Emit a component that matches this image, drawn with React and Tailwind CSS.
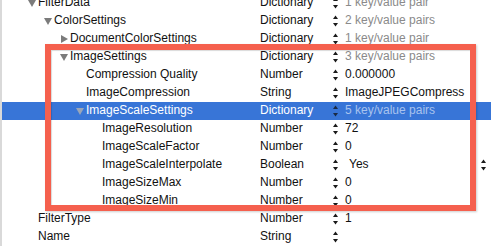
const ROWS = [
    { key: 'FilterData', level: 0, tri: 'down', type: 'Dictionary', value: '1 key/value pair', muted: true },
    { key: 'ColorSettings', level: 1, tri: 'down', type: 'Dictionary', value: '2 key/value pairs', muted: true },
    { key: 'DocumentColorSettings', level: 2, tri: 'right', type: 'Dictionary', value: '1 key/value pair', muted: true },
    { key: 'ImageSettings', level: 2, tri: 'down', type: 'Dictionary', value: '3 key/value pairs', muted: true },
    { key: 'Compression Quality', level: 3, type: 'Number', value: '0.000000' },
    { key: 'ImageCompression', level: 3, type: 'String', value: 'ImageJPEGCompress' },
    { key: 'ImageScaleSettings', level: 3, tri: 'down', type: 'Dictionary', value: '5 key/value pairs', muted: true, selected: true },
    { key: 'ImageResolution', level: 4, type: 'Number', value: '72' },
    { key: 'ImageScaleFactor', level: 4, type: 'Number', value: '0' },
    { key: 'ImageScaleInterpolate', level: 4, type: 'Boolean', value: 'Yes', popup: true },
    { key: 'ImageSizeMax', level: 4, type: 'Number', value: '0' },
    { key: 'ImageSizeMin', level: 4, type: 'Number', value: '0' },
    { key: 'FilterType', level: 0, type: 'Number', value: '1' },
    { key: 'Name', level: 0, type: 'String', value: '' },
];

const INDENT = ['pl-[25px]', 'pl-[41px]', 'pl-[57px]', 'pl-[73px]', 'pl-[89px]'];

function Disclosure({ dir, selected }) {
    const fill = selected ? '#9aa6b8' : '#7b7b7b';
    return (
        <svg width="11" height="18" viewBox="0 0 11 18" className="shrink-0">
            {dir === 'down' && <path d="M1 6 L9 6 L5 13 Z" fill={fill} />}
            {dir === 'right' && <path d="M2 5 L9 9 L2 13 Z" fill={fill} />}
        </svg>
    );
}

function Stepper({ selected }) {
    const fill = selected ? '#1a2a44' : '#1a1a1a';
    return (
        <svg width="7" height="18" viewBox="0 0 7 18" className="shrink-0">
            <path d="M1 7 L3.5 3.5 L6 7 Z" fill={fill} />
            <path d="M1 11 L6 11 L3.5 14.5 Z" fill={fill} />
        </svg>
    );
}

function Row({ row }) {
    const sel = row.selected;
    return (
        <div className={`h-[18px] flex items-center ${sel ? 'bg-[#3875d7] text-white' : 'text-[#111]'}`}>
            <div className={`w-[258px] flex items-center ${INDENT[row.level]}`}>
                <Disclosure dir={row.tri} selected={sel} />
                <span className="relative -top-px whitespace-nowrap">{row.key}</span>
            </div>
            <div className="relative -top-px w-[72px]">{row.type}</div>
            <Stepper selected={sel} />
            <div className="flex-1 flex items-center pl-[6px] pr-[4px]">
                <span
                    className={`relative -top-px whitespace-nowrap ${row.popup ? 'pl-[4px]' : ''} ${
                        row.muted ? (sel ? 'text-[#a9c3ee]' : 'text-[#8a8a8a]') : ''
                    }`}
                >
                    {row.value}
                </span>
                {row.popup && (
                    <svg width="7" height="18" viewBox="0 0 7 18" className="ml-auto">
                        <path d="M1 7 L3.5 3.5 L6 7 Z" fill="#1a1a1a" />
                        <path d="M1 11 L6 11 L3.5 14.5 Z" fill="#1a1a1a" />
                    </svg>
                )}
            </div>
        </div>
    );
}

export default function App() {
    return (
        <div
            className="relative w-[491px] h-[246px] overflow-hidden bg-white border-l-2 border-[#d9d9d9] text-[12px] leading-[18px]"
            style={{ fontFamily: '"Liberation Sans", Arial, sans-serif' }}
        >
            <div className="-mt-[6px]">
                {ROWS.map((row) => (
                    <Row key={row.key} row={row} />
                ))}
            </div>
            <div className="absolute left-[43px] top-[44px] w-[431px] h-[167px] border-[6px] border-[#f5604e] shadow-[1px_1px_2px_rgba(0,0,0,0.2),inset_1px_1px_1px_rgba(0,0,0,0.15)]" />
        </div>
    );
}
